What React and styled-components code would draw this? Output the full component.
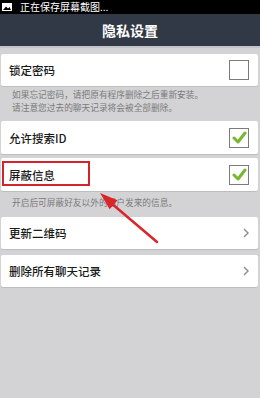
import React from 'react'
import styled, { createGlobalStyle } from 'styled-components'

const Global = createGlobalStyle`
  html, body { margin: 0; padding: 0; }
  body {
    width: 260px;
    height: 398px;
    overflow: hidden;
    background: #d3d3d5;
    font-family: "Noto Sans CJK SC", "Noto Sans", sans-serif;
  }
`

const Screen = styled.div`
  position: relative;
  width: 260px;
  height: 398px;
  background: #d3d3d5;
  display: flex;
  flex-direction: column;
`

const StatusBar = styled.div`
  height: 14px;
  background: #000;
  color: #fff;
  font-size: 10px;
  line-height: 14px;
  display: flex;
  align-items: center;
  gap: 8px;
  padding-left: 2px;
`

const Header = styled.div`
  height: 32px;
  background: #323946;
  border-bottom: 2px solid #c4c5ca;
  color: #fff;
  font-size: 14px;
  font-weight: bold;
  display: flex;
  align-items: center;
  justify-content: center;
`

const List = styled.div`
  display: flex;
  flex-direction: column;
  padding: 6px 2px 0 1px;
`

const Card = styled.div`
  height: ${p => p.$h || 32}px;
  margin-top: ${p => p.$gap || 0}px;
  background: #fff;
  border-radius: 2px;
  box-shadow: 0 1px 0 #bdbdc0;
  display: flex;
  align-items: center;
  justify-content: space-between;
  padding: 0 9px 0 7px;
  font-size: 11.5px;
  font-weight: 500;
  color: #1a1a1a;
`

const Label = styled.span`
  position: relative;
  padding-left: 1px;
`

const Highlight = styled.div`
  position: absolute;
  left: -6px;
  top: -6px;
  width: 84px;
  height: 21px;
  border: 2px solid #d3232b;
`

const Note = styled.div`
  height: ${p => p.$h}px;
  padding: ${p => p.$pt}px 0 0 11px;
  box-sizing: border-box;
  font-size: 8.7px;
  line-height: 13px;
  color: #7a7a7a;
`

const NoteLine = styled.div`
  white-space: nowrap;
`

const Box = styled.div`
  width: 18px;
  height: 18px;
  border: 1.5px solid #7b7b7b;
  background: #fff;
  display: flex;
  align-items: center;
  justify-content: center;
`

const Arrow = styled.svg`
  position: absolute;
  left: 95px;
  top: 188px;
`

function Check({ on }) {
  return (
    <Box>
      {on && (
        <svg width="15" height="13" viewBox="0 0 15 13">
          <path d="M2 7 L6 11 L13 2" fill="none" stroke="#76b82e" strokeWidth="3" strokeLinecap="round" strokeLinejoin="round" />
        </svg>
      )}
    </Box>
  )
}

function Chevron() {
  return (
    <svg width="6" height="10" viewBox="0 0 6 10">
      <path d="M1 1 L5 5 L1 9" fill="none" stroke="#8c8c8c" strokeWidth="1.4" />
    </svg>
  )
}

export default function App() {
  return (
    <Screen>
      <Global />
      <StatusBar>
        <svg width="10" height="8" viewBox="0 0 10 8">
          <rect x="0" y="0" width="10" height="8" fill="#fff" />
          <path d="M1 7 L4 3.5 L6 5.5 L7.5 4 L9 7 Z" fill="#000" />
        </svg>
        正在保存屏幕截图...
      </StatusBar>
      <Header>隐私设置</Header>
      <List>
        <Card>
          <Label>锁定密码</Label>
          <Check />
        </Card>
        <Note $h={35} $pt={2}>
          <NoteLine>如果忘记密码，请把原有程序删除之后重新安装。</NoteLine>
          <NoteLine>请注意您过去的聊天记录将会被全部删除。</NoteLine>
        </Note>
        <Card $h={33}>
          <Label>允许搜索ID</Label>
          <Check on />
        </Card>
        <Card $h={33} $gap={4}>
          <Label>
            屏蔽信息
            <Highlight />
          </Label>
          <Check on />
        </Card>
        <Note $h={26} $pt={5}>
          <NoteLine>开启后可屏蔽好友以外的用户发来的信息。</NoteLine>
        </Note>
        <Card>
          <Label>更新二维码</Label>
          <Chevron />
        </Card>
        <Card $gap={6}>
          <Label>删除所有聊天记录</Label>
          <Chevron />
        </Card>
      </List>
      <Arrow width="70" height="60" viewBox="0 0 70 60">
        <line x1="62" y1="54" x2="16" y2="15" stroke="#d9262b" strokeWidth="2.5" strokeLinecap="round" />
        <path d="M5 5 L22.5 12.2 L14.7 21.2 Z" fill="#d9262b" />
      </Arrow>
    </Screen>
  )
}
